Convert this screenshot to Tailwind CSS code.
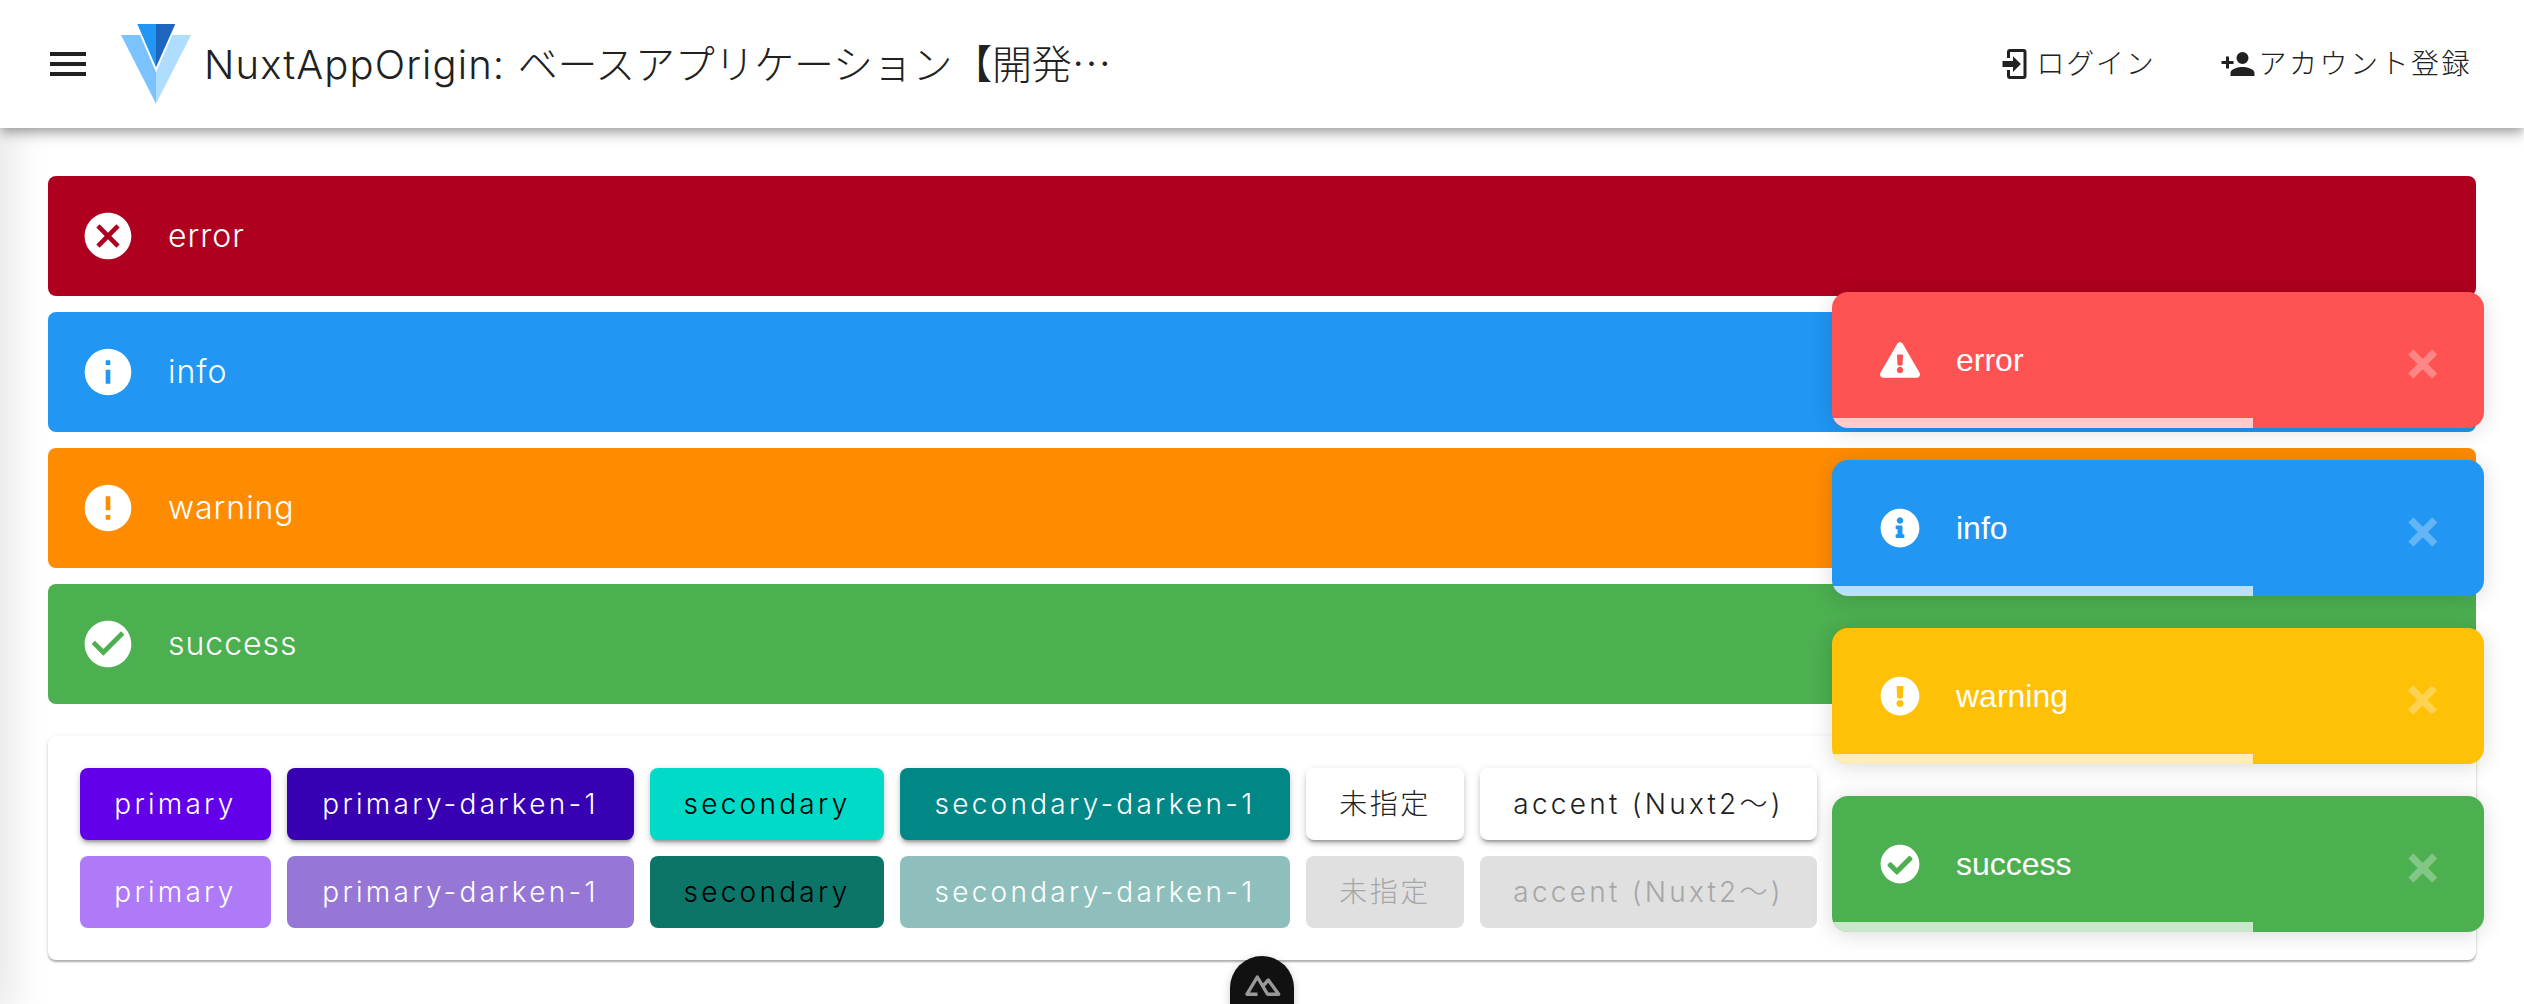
<!DOCTYPE html>
<html lang="ja">

<head>
    <meta charset="UTF-8" />
    <meta name="viewport" content="width=device-width, initial-scale=1.0" />
    <title>NuxtAppOrigin</title>
    <script src="https://cdn.jsdelivr.net/npm/@tailwindcss/browser@4"></script>
</head>

<body class="relative h-[1004px] overflow-hidden bg-white font-['Inter','Noto_Sans_CJK_JP',sans-serif] text-[#212121]">
    <!-- hidden drawer, only its shadow shows -->
    <div class="absolute top-[128px] bottom-0 left-[-40px] w-[40px] shadow-[0_0_40px_12px_rgba(0,0,0,0.1)]"></div>

    <header class="relative z-10 flex h-[128px] items-center justify-between bg-white pr-[52px] pl-[44px] shadow-[0_4px_8px_-2px_rgba(0,0,0,0.2),0_8px_10px_rgba(0,0,0,0.14),0_2px_20px_rgba(0,0,0,0.12)]">
        <div class="flex items-center">
            <svg class="h-[48px] w-[48px]" viewBox="0 0 24 24" fill="#212121"><path d="M3,6H21V8H3V6M3,11H21V13H3V11M3,16H21V18H3V16Z" /></svg>
            <svg class="mt-[-1px] ml-[29px] h-[80px] w-[70px]" viewBox="0 0 70 80">
                <polygon points="16.3,0 35,0 35,43.3" fill="#2196f3" />
                <polygon points="35,0 54.3,0 35,43.3" fill="#1e66bd" />
                <polygon points="0,11 19,11 35,48.3 35,79.7" fill="#7bc3ff" />
                <polygon points="70,11 51.3,11 35,48.3 35,79.7" fill="#aeddff" />
            </svg>
            <span class="mt-[-2px] ml-[13px] text-[40px] leading-none font-light tracking-[0.028em]">NuxtAppOrigin: <span class="tracking-[-0.006em]">ベースアプリケーション【開発<span class="font-['Noto_Sans_CJK_JP']">…</span></span></span>
        </div>
        <div class="flex items-center gap-[64px] text-[28px] tracking-[0.089em]">
            <div class="flex items-center gap-[3px]">
                <svg class="h-[36px] w-[36px]" viewBox="0 0 24 24" fill="#212121"><path d="M10,17.25V14H3V10H10V6.75L15.25,12L10,17.25M8,2H17A2,2 0 0,1 19,4V20A2,2 0 0,1 17,22H8A2,2 0 0,1 6,20V16H8V20H17V4H8V8H6V4A2,2 0 0,1 8,2Z" /></svg>
                <span class="font-light tracking-[0.0625em]">ログイン</span>
            </div>
            <div class="flex items-center gap-[3px]">
                <svg class="h-[36px] w-[36px]" viewBox="0 0 24 24" fill="#212121"><path d="M15,14C12.33,14 7,15.33 7,18V20H23V18C23,15.33 17.67,14 15,14M6,10V7H4V10H1V12H4V15H6V12H9V10M15,12A4,4 0 0,0 19,8A4,4 0 0,0 15,4A4,4 0 0,0 11,8A4,4 0 0,0 15,12Z" /></svg>
                <span class="font-light">アカウント登録</span>
            </div>
        </div>
    </header>

    <main class="flex flex-col gap-[16px] px-[48px] pt-[48px]">
        <div class="flex h-[120px] items-center gap-[32px] rounded-[8px] bg-[#b00020] pl-[32px] text-[32px] font-light tracking-[0.03em] text-white">
            <svg class="h-[56px] w-[56px]" viewBox="0 0 24 24" fill="#fff"><path d="M12,2C17.53,2 22,6.47 22,12C22,17.53 17.53,22 12,22C6.47,22 2,17.53 2,12C2,6.47 6.47,2 12,2M15.59,7L12,10.59L8.41,7L7,8.41L10.59,12L7,15.59L8.41,17L12,13.41L15.59,17L17,15.59L13.41,12L17,8.41L15.59,7Z" /></svg>
            <span>error</span>
        </div>
        <div class="flex h-[120px] items-center gap-[32px] rounded-[8px] bg-[#2196f3] pl-[32px] text-[32px] font-light tracking-[0.03em] text-white">
            <svg class="h-[56px] w-[56px]" viewBox="0 0 24 24" fill="#fff"><path d="M13,9H11V7H13M13,17H11V11H13M12,2A10,10 0 0,0 2,12A10,10 0 0,0 12,22A10,10 0 0,0 22,12A10,10 0 0,0 12,2Z" /></svg>
            <span>info</span>
        </div>
        <div class="flex h-[120px] items-center gap-[32px] rounded-[8px] bg-[#ff8c00] pl-[32px] text-[32px] font-light tracking-[0.03em] text-white">
            <svg class="h-[56px] w-[56px]" viewBox="0 0 24 24" fill="#fff"><path d="M13,13H11V7H13M13,17H11V15H13M12,2A10,10 0 0,0 2,12A10,10 0 0,0 12,22A10,10 0 0,0 22,12A10,10 0 0,0 12,2Z" /></svg>
            <span>warning</span>
        </div>
        <div class="flex h-[120px] items-center gap-[32px] rounded-[8px] bg-[#4caf50] pl-[32px] text-[32px] font-light tracking-[0.03em] text-white">
            <svg class="h-[56px] w-[56px]" viewBox="0 0 24 24" fill="#fff"><path d="M12 2C6.5 2 2 6.5 2 12S6.5 22 12 22 22 17.5 22 12 17.5 2 12 2M10 17L5 12L6.41 10.59L10 14.17L17.59 6.58L19 8L10 17Z" /></svg>
            <span>success</span>
        </div>

        <section class="mt-[16px] flex flex-col gap-[16px] rounded-[8px] bg-white p-[32px] shadow-[0_2px_2px_rgba(0,0,0,0.3),0_0_6px_rgba(0,0,0,0.06)]">
            <div class="flex gap-[16px] text-[28px] font-light tracking-[0.116em]">
                <button class="flex h-[72px] w-[191px] items-center justify-center rounded-[8px] bg-[#6200ea] text-white shadow-[0_4px_2px_-2px_rgba(0,0,0,0.2),0_4px_4px_rgba(0,0,0,0.14),0_2px_10px_rgba(0,0,0,0.12)]">primary</button>
                <button class="flex h-[72px] w-[347px] items-center justify-center rounded-[8px] bg-[#3700b3] text-white shadow-[0_4px_2px_-2px_rgba(0,0,0,0.2),0_4px_4px_rgba(0,0,0,0.14),0_2px_10px_rgba(0,0,0,0.12)]">primary-darken-1</button>
                <button class="flex h-[72px] w-[234px] items-center justify-center rounded-[8px] bg-[#00dac6] text-black shadow-[0_4px_2px_-2px_rgba(0,0,0,0.2),0_4px_4px_rgba(0,0,0,0.14),0_2px_10px_rgba(0,0,0,0.12)]">secondary</button>
                <button class="flex h-[72px] w-[390px] items-center justify-center rounded-[8px] bg-[#018786] text-white shadow-[0_4px_2px_-2px_rgba(0,0,0,0.2),0_4px_4px_rgba(0,0,0,0.14),0_2px_10px_rgba(0,0,0,0.12)]">secondary-darken-1</button>
                <button class="flex h-[72px] w-[158px] items-center justify-center rounded-[8px] bg-white tracking-[0.089em] shadow-[0_4px_2px_-2px_rgba(0,0,0,0.2),0_4px_4px_rgba(0,0,0,0.14),0_2px_10px_rgba(0,0,0,0.12)]">未指定</button>
                <button class="flex h-[72px] w-[337px] items-center justify-center rounded-[8px] bg-white shadow-[0_4px_2px_-2px_rgba(0,0,0,0.2),0_4px_4px_rgba(0,0,0,0.14),0_2px_10px_rgba(0,0,0,0.12)]">accent (Nuxt2〜)</button>
            </div>
            <div class="flex gap-[16px] text-[28px] font-light tracking-[0.116em]">
                <button class="flex h-[72px] w-[191px] items-center justify-center rounded-[8px] bg-[#ae7af7] text-white">primary</button>
                <button class="flex h-[72px] w-[347px] items-center justify-center rounded-[8px] bg-[#9777d6] text-white">primary-darken-1</button>
                <button class="flex h-[72px] w-[234px] items-center justify-center rounded-[8px] bg-[#0d7468] text-black">secondary</button>
                <button class="flex h-[72px] w-[390px] items-center justify-center rounded-[8px] bg-[#8ebfbc] text-white">secondary-darken-1</button>
                <button class="flex h-[72px] w-[158px] items-center justify-center rounded-[8px] bg-[#e0e0e0] tracking-[0.089em] text-[#a6a6a6]">未指定</button>
                <button class="flex h-[72px] w-[337px] items-center justify-center rounded-[8px] bg-[#e0e0e0] text-[#a6a6a6]">accent (Nuxt2〜)</button>
            </div>
        </section>
    </main>

    <!-- toasts -->
    <div class="absolute top-[292px] left-[1832px] z-20 flex w-[652px] flex-col gap-[32px] font-['Liberation_Sans',sans-serif] text-[32px] text-white">
        <div class="relative flex h-[136px] items-center overflow-hidden rounded-[16px] bg-[#ff5252] pl-[48px] shadow-[0_2px_20px_rgba(0,0,0,0.1),0_4px_30px_rgba(0,0,0,0.05)]">
            <svg class="h-[40px] w-[40px]" viewBox="0 0 576 512" fill="#fff"><path d="M569.517 440.013C587.975 472.007 564.806 512 527.94 512H48.054c-36.937 0-59.999-40.055-41.577-71.987L246.423 24.035c18.467-32.009 64.72-31.951 83.154 0l239.94 416.013zM288 354c-25.405 0-46 20.595-46 46s20.595 46 46 46 46-20.595 46-46-20.595-46-46-46zm-43.673-165.346l7.418 136c.347 6.364 5.609 11.346 11.982 11.346h48.546c6.373 0 11.635-4.982 11.982-11.346l7.418-136c.375-6.874-5.098-12.654-11.982-12.654h-63.383c-6.884 0-12.356 5.78-11.981 12.654z" /></svg>
            <span class="ml-[36px]">error</span>
            <span class="absolute top-[35px] right-[43px] font-['DejaVu_Sans'] text-[44px] leading-[72px] font-bold opacity-30 [-webkit-text-stroke:2px_white]">×</span>
            <div class="absolute bottom-0 left-0 h-[10px] w-[421px] bg-white/70"></div>
        </div>
        <div class="relative flex h-[136px] items-center overflow-hidden rounded-[16px] bg-[#2196f3] pl-[48px] shadow-[0_2px_20px_rgba(0,0,0,0.1),0_4px_30px_rgba(0,0,0,0.05)]">
            <svg class="h-[40px] w-[40px]" viewBox="0 0 512 512" fill="#fff"><path d="M256 8C119.043 8 8 119.083 8 256c0 136.997 111.043 248 248 248s248-111.003 248-248C504 119.083 392.957 8 256 8zm0 110c23.196 0 42 18.804 42 42s-18.804 42-42 42-42-18.804-42-42 18.804-42 42-42zm56 254c0 6.627-5.373 12-12 12h-88c-6.627 0-12-5.373-12-12v-24c0-6.627 5.373-12 12-12h12v-64h-12c-6.627 0-12-5.373-12-12v-24c0-6.627 5.373-12 12-12h64c6.627 0 12 5.373 12 12v100h12c6.627 0 12 5.373 12 12v24z" /></svg>
            <span class="ml-[36px]">info</span>
            <span class="absolute top-[35px] right-[43px] font-['DejaVu_Sans'] text-[44px] leading-[72px] font-bold opacity-30 [-webkit-text-stroke:2px_white]">×</span>
            <div class="absolute bottom-0 left-0 h-[10px] w-[421px] bg-white/70"></div>
        </div>
        <div class="relative flex h-[136px] items-center overflow-hidden rounded-[16px] bg-[#ffc107] pl-[48px] shadow-[0_2px_20px_rgba(0,0,0,0.1),0_4px_30px_rgba(0,0,0,0.05)]">
            <svg class="h-[40px] w-[40px]" viewBox="0 0 512 512" fill="#fff"><path d="M504 256c0 136.997-111.043 248-248 248S8 392.997 8 256C8 119.083 119.043 8 256 8s248 111.083 248 248zm-248 50c-25.405 0-46 20.595-46 46s20.595 46 46 46 46-20.595 46-46-20.595-46-46-46zm-43.673-165.346l7.418 136c.347 6.364 5.609 11.346 11.982 11.346h48.546c6.373 0 11.635-4.982 11.982-11.346l7.418-136c.375-6.874-5.098-12.654-11.982-12.654h-63.383c-6.884 0-12.356 5.78-11.981 12.654z" /></svg>
            <span class="ml-[36px]">warning</span>
            <span class="absolute top-[35px] right-[43px] font-['DejaVu_Sans'] text-[44px] leading-[72px] font-bold opacity-30 [-webkit-text-stroke:2px_white]">×</span>
            <div class="absolute bottom-0 left-0 h-[10px] w-[421px] bg-white/70"></div>
        </div>
        <div class="relative flex h-[136px] items-center overflow-hidden rounded-[16px] bg-[#4caf50] pl-[48px] shadow-[0_2px_20px_rgba(0,0,0,0.1),0_4px_30px_rgba(0,0,0,0.05)]">
            <svg class="h-[40px] w-[40px]" viewBox="0 0 512 512" fill="#fff"><path d="M504 256c0 136.967-111.033 248-248 248S8 392.967 8 256 119.033 8 256 8s248 111.033 248 248zM227.314 387.314l184-184c6.248-6.248 6.248-16.379 0-22.627l-22.627-22.627c-6.248-6.249-16.379-6.249-22.628 0L216 308.118l-70.059-70.059c-6.248-6.248-16.379-6.248-22.628 0l-22.627 22.627c-6.248 6.248-6.248 16.379 0 22.627l104 104c6.249 6.25 16.379 6.25 22.628.001z" /></svg>
            <span class="ml-[36px]">success</span>
            <span class="absolute top-[35px] right-[43px] font-['DejaVu_Sans'] text-[44px] leading-[72px] font-bold opacity-30 [-webkit-text-stroke:2px_white]">×</span>
            <div class="absolute bottom-0 left-0 h-[10px] w-[421px] bg-white/70"></div>
        </div>
    </div>

    <!-- devtools button -->
    <div class="absolute top-[956px] left-[1230px] z-10 flex h-[84px] w-[64px] justify-center rounded-full bg-[#111] pt-[16px] shadow-[0_2px_8px_rgba(0,0,0,0.2)]">
        <svg class="h-[26px] w-[40px]" viewBox="0 0 40 26" fill="none" stroke="#999" stroke-width="3.4" stroke-linejoin="round"><path d="M15.5 22.2H5L15.3 5L25.5 22.2H36.7L26.3 8L20.5 14.5" /></svg>
    </div>
</body>

</html>
